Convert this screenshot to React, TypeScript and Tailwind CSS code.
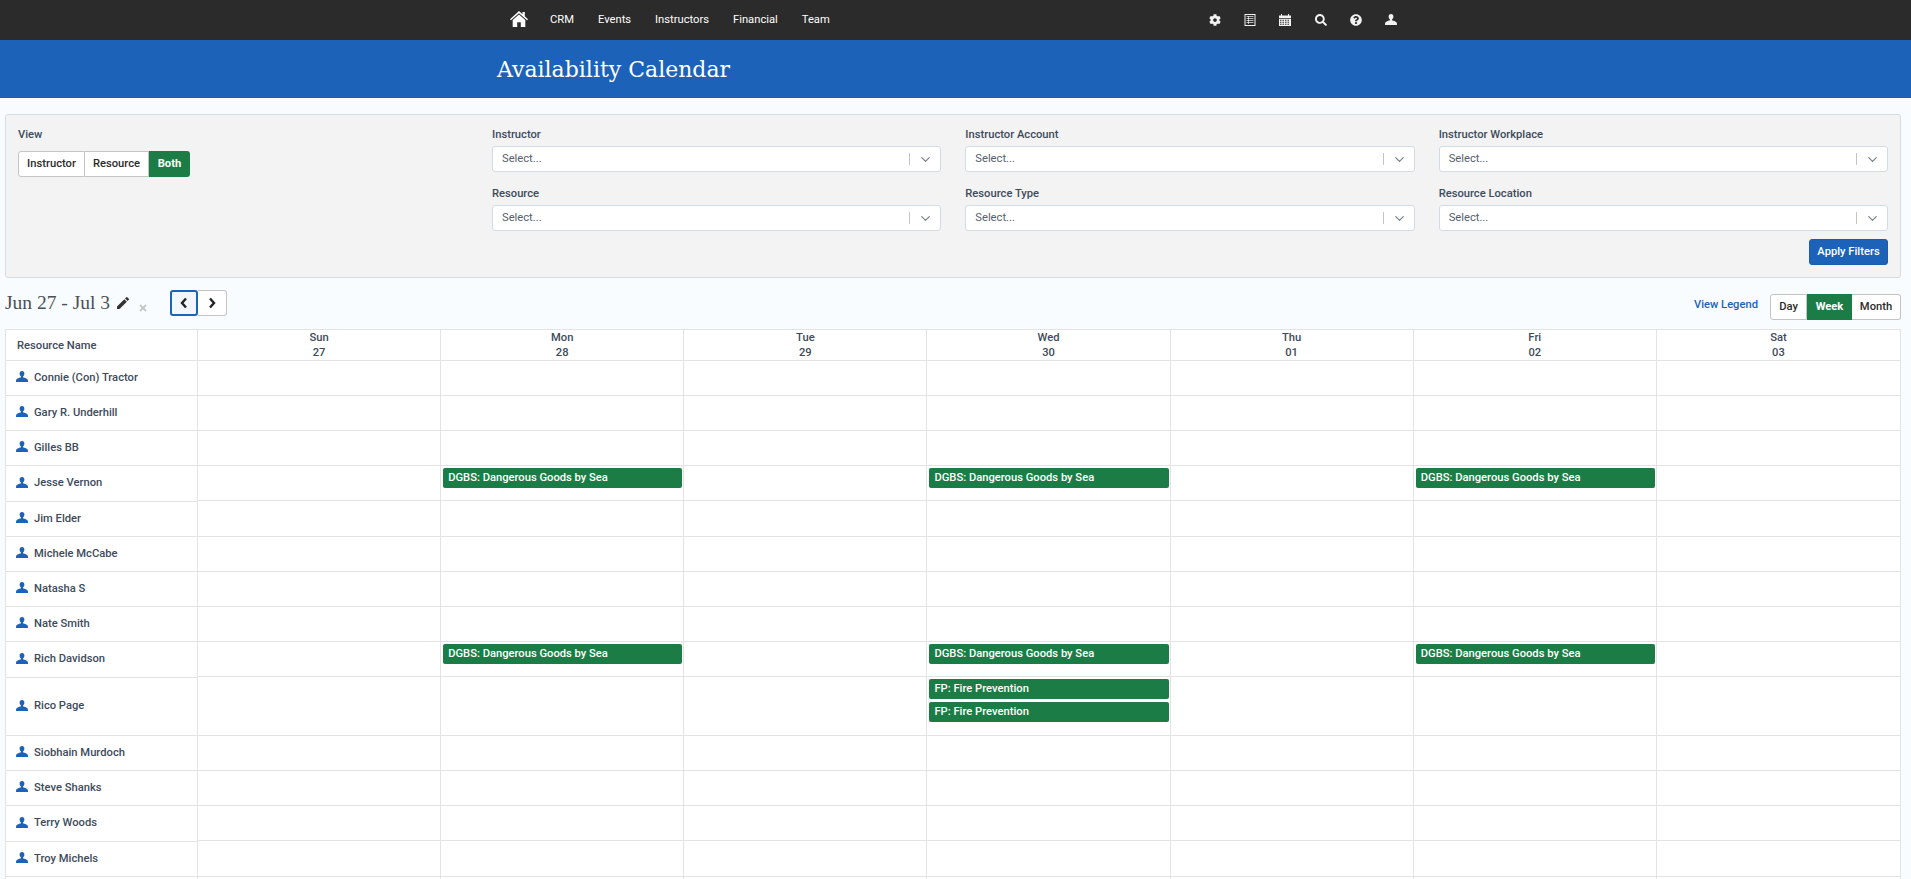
import React from 'react';
import { FaCog, FaSearch, FaQuestionCircle, FaTimes } from 'react-icons/fa';
import { MdEdit } from 'react-icons/md';
import { LuChevronDown } from 'react-icons/lu';

const slab = "font-['DejaVu_Serif',serif]";

const days = [
  { name: 'Sun', date: '27' },
  { name: 'Mon', date: '28' },
  { name: 'Tue', date: '29' },
  { name: 'Wed', date: '30' },
  { name: 'Thu', date: '01' },
  { name: 'Fri', date: '02' },
  { name: 'Sat', date: '03' },
];

const DGBS = 'DGBS: Dangerous Goods by Sea';
const FP = 'FP: Fire Prevention';

const h35 = 'h-[35px]';
const h36 = 'h-[36px]';

const resources: { name: string; left: string; right: string; events?: Record<number, string[]> }[] = [
  { name: 'Connie (Con) Tractor', left: h35, right: h35 },
  { name: 'Gary R. Underhill', left: h35, right: h35 },
  { name: 'Gilles BB', left: h35, right: h35 },
  { name: 'Jesse Vernon', left: h36, right: h35, events: { 1: [DGBS], 3: [DGBS], 5: [DGBS] } },
  { name: 'Jim Elder', left: h35, right: h36 },
  { name: 'Michele McCabe', left: h35, right: h35 },
  { name: 'Natasha S', left: h35, right: h35 },
  { name: 'Nate Smith', left: h35, right: h35 },
  { name: 'Rich Davidson', left: h36, right: h35, events: { 1: [DGBS], 3: [DGBS], 5: [DGBS] } },
  { name: 'Rico Page', left: 'h-[58px]', right: 'h-[59px]', events: { 3: [FP, FP] } },
  { name: 'Siobhain Murdoch', left: h35, right: h35 },
  { name: 'Steve Shanks', left: h35, right: h35 },
  { name: 'Terry Woods', left: h36, right: h35 },
  { name: 'Troy Michels', left: h35, right: h36 },
];

const UserIcon = ({ className }: { className?: string }) => (
  <svg viewBox="1 1 14 14" preserveAspectRatio="none" className={className} fill="currentColor">
    <path d="M8 1C6.200 1 5.200 2.300 5.200 4.100c0 1.400.6 2.900 1.400 3.700.3.300.3.900 0 1.200-.5.600-4.600 1.300-5.300 3.200-.2.600-.3 1.400-.3 2.800h14c0-1.400-.1-2.200-.3-2.800-.7-1.900-4.800-2.600-5.300-3.200-.3-.3-.3-.9 0-1.200.8-.8 1.400-2.300 1.400-3.700C10.800 2.300 9.800 1 8 1z" />
  </svg>
);

const HomeIcon = () => (
  <svg viewBox="0 0 18 16" className="w-[18px] h-4" fill="currentColor">
    <path d="M9 0L0 8.300l.9 1L9 2.300l8.100 7 .9-1-3.200-3V1h-2.300v2.200z" />
    <path d="M9 3.600L2.700 9v7h4.500v-4.700h3.600V16h4.500V9z" />
  </svg>
);

const ListIcon = () => (
  <svg viewBox="0 0 12 12" className="w-3 h-3" fill="none" stroke="currentColor">
    <rect x="1" y="0.500" width="10" height="11" />
    <path d="M2.500 2.500h7M2.500 4.500h7M2.500 6.500h7M2.500 8.500h7M4.500 2v8" strokeWidth="1" opacity="0.7" />
  </svg>
);

const CalendarIcon = () => (
  <svg viewBox="0 0 12 12" className="w-3 h-3" fill="currentColor">
    <path d="M2 0h1v1.500h6V0h1v1.500h2v2.500H0V1.500h2z" />
    <path d="M0 4.800h12V12H0zM1 5.800v1h1.500v-1zM3.500 5.800v1H5v-1zM6 5.800v1h1.500v-1zM8.500 5.800v1H10v-1zM1 7.800v1h1.500v-1zM3.500 7.800v1H5v-1zM6 7.800v1h1.500v-1zM8.500 7.800v1H10v-1zM1 9.800v1h1.500v-1zM3.500 9.800v1H5v-1zM6 9.800v1h1.500v-1zM8.500 9.800v1H10v-1z" fillRule="evenodd" />
  </svg>
);

const Chevron = ({ d }: { d: string }) => (
  <svg viewBox="0 0 8 12" className="w-2 h-3" fill="none" stroke="currentColor" strokeWidth="2.400">
    <path d={d} />
  </svg>
);

const FilterSelect = ({ label }: { label: string }) => (
  <div className="flex flex-col">
    <label className="text-[11.2px] font-medium text-[#3d4b5c] h-4 leading-4 mb-[3px]">{label}</label>
    <div className="h-[26px] bg-white border border-[#d3dbe3] rounded-[3px] flex items-center pl-[9px] pr-[7px]">
      <span className="text-[11.2px] text-[#55606c] flex-1">Select...</span>
      <span className="w-px h-3 bg-[#c4c4c4] mr-2" />
      <LuChevronDown className="w-[15px] h-[15px] text-[#7d858c]" />
    </div>
  </div>
);

const EventBar = ({ title }: { title: string }) => (
  <div className="h-5 bg-[#1b7d45] rounded-[2px] text-white text-[11.2px] font-medium leading-5 pl-[5px] ml-[2px] mr-[1px] truncate">
    {title}
  </div>
);

export default function App() {
  return (
    <div className="h-screen overflow-hidden bg-[#f8fcff] font-['Roboto',sans-serif] flex flex-col">
      <header className="h-10 shrink-0 bg-[#2b2b2b] text-white flex items-center justify-between pl-[510px] pr-[514px]">
        <nav className="flex items-center">
          <span className="mr-[22px] -mt-[1px]"><HomeIcon /></span>
          <div className="flex items-center gap-6 text-[11.2px] font-normal">
            <span>CRM</span>
            <span>Events</span>
            <span>Instructors</span>
            <span>Financial</span>
            <span>Team</span>
          </div>
        </nav>
        <div className="flex items-center gap-[23.2px] text-[#f2f2f2] -mt-[1px]">
          <FaCog className="w-3 h-3" />
          <ListIcon />
          <CalendarIcon />
          <FaSearch className="w-3 h-3" />
          <FaQuestionCircle className="w-3 h-3" />
          <UserIcon className="w-3 h-[11px]" />
        </div>
      </header>

      <div className="h-[58px] shrink-0 bg-[#1c62b9] flex items-center pl-[497px] pt-[3px] border-b border-[#1b5cad]">
        <h1 className={`${slab} text-[22px] text-white leading-none`}>Availability Calendar</h1>
      </div>

      <section className="mt-4 mx-[5px] w-[1896px] h-[164px] shrink-0 bg-[#f3f3f3] border border-[#d8dcdf] rounded-[3px] pt-3 px-3 flex">
        <div className="w-[474px] shrink-0">
          <div className="text-[11.2px] font-medium text-[#3d4b5c] h-4 leading-4 mb-[7px]">View</div>
          <div className="inline-flex h-[26px] text-[11.2px] font-medium text-[#2b2b2b]">
            <span className="w-[67px] bg-white border border-[#c4c4c4] rounded-l-[3px] flex items-center justify-center">Instructor</span>
            <span className="w-[64px] bg-white border-y border-r border-[#c4c4c4] flex items-center justify-center">Resource</span>
            <span className="w-[41px] bg-[#1b7d45] text-white font-bold rounded-r-[3px] flex items-center justify-center">Both</span>
          </div>
        </div>
        <div className="flex-1 flex flex-col">
          <div className="grid grid-cols-3 gap-x-6 gap-y-[14px]">
            <FilterSelect label="Instructor" />
            <FilterSelect label="Instructor Account" />
            <FilterSelect label="Instructor Workplace" />
            <FilterSelect label="Resource" />
            <FilterSelect label="Resource Type" />
            <FilterSelect label="Resource Location" />
          </div>
          <div className="flex justify-end mt-2">
            <button className="w-[79px] h-[26px] bg-[#1c62b9] border border-[#1b5cad] rounded-[3px] text-white text-[11.2px] font-medium">
              Apply Filters
            </button>
          </div>
        </div>
      </section>

      <div className="h-[51px] shrink-0 mx-[5px] w-[1896px] flex items-start">
        <div className="flex items-center h-[26px] mt-[12px]">
          <span className="font-['Liberation_Serif',serif] text-[19.5px] text-[#4a4f55] w-[110px] shrink-0 whitespace-nowrap">Jun 27 - Jul 3</span>
          <MdEdit className="w-4 h-4 text-[#333] shrink-0" />
          <FaTimes className="w-[10px] h-[10px] text-[#c4c4c4] ml-[7px] mt-[10px] shrink-0" />
          <div className="flex h-[26px] ml-[22px]">
            <button className="w-[28px] h-[26px] bg-[#f1f6fb] border-2 border-[#1c62b9] rounded-[3px] flex items-center justify-center text-[#222]">
              <Chevron d="M6 1.500L2 6l4 4.500" />
            </button>
            <button className="w-[29px] h-[26px] bg-white border-y border-r border-[#c4c4c4] rounded-r-[3px] flex items-center justify-center text-[#222]">
              <Chevron d="M2 1.500L6 6l-4 4.500" />
            </button>
          </div>
        </div>
        <div className="ml-auto flex items-center mt-[16px]">
          <span className="text-[11.2px] font-medium text-[#1c62b9] mr-[12px] -mt-[3px]">View Legend</span>
          <div className="flex h-[26px] text-[11.2px] font-medium text-[#2b2b2b]">
            <span className="w-[37px] bg-white border border-[#c4c4c4] rounded-l-[3px] flex items-center justify-center">Day</span>
            <span className="w-[45px] bg-[#1b7d45] text-white font-bold flex items-center justify-center">Week</span>
            <span className="w-[49px] bg-white border-y border-r border-[#c4c4c4] rounded-r-[3px] flex items-center justify-center">Month</span>
          </div>
        </div>
      </div>

      <div className="mx-[5px] w-[1896px] bg-white border-l border-r border-t border-[#e3e3e3] flex text-[11.2px] font-medium text-[#3d4b5c]">
        <div className="w-[192px] shrink-0 border-r border-[#e3e3e3]">
          <div className="h-[31px] border-b border-[#e3e3e3] flex items-center pl-[11px] pt-[2px]">Resource Name</div>
          {resources.map((r) => (
            <div key={r.name} className={`${r.left} border-b border-[#e3e3e3] flex items-center pl-[10px]`}>
              <UserIcon className="w-3 h-[11px] text-[#1c62b9] mr-[6px] -mt-[3px]" />
              <span>{r.name}</span>
            </div>
          ))}
          <div className="h-[35px]" />
        </div>
        <div className="flex-1 min-w-0">
          <div className="grid grid-cols-7 h-[31px] border-b border-[#e3e3e3]">
            {days.map((d, i) => (
              <div key={d.name} className={`text-center leading-[15px] ${i < 6 ? 'border-r border-[#e3e3e3]' : ''}`}>
                <div>{d.name}</div>
                <div>{d.date}</div>
              </div>
            ))}
          </div>
          {resources.map((r) => (
            <div key={r.name} className={`grid grid-cols-7 ${r.right} border-b border-[#e3e3e3]`}>
              {days.map((d, i) => (
                <div key={d.name} className={`pt-[2px] flex flex-col gap-[3px] ${i < 6 ? 'border-r border-[#e3e3e3]' : ''}`}>
                  {r.events?.[i]?.map((title, k) => <EventBar key={k} title={title} />)}
                </div>
              ))}
            </div>
          ))}
          <div className="grid grid-cols-7 h-[35px]">
            {days.map((d, i) => (
              <div key={d.name} className={i < 6 ? 'border-r border-[#e3e3e3]' : ''} />
            ))}
          </div>
        </div>
      </div>
    </div>
  );
}
